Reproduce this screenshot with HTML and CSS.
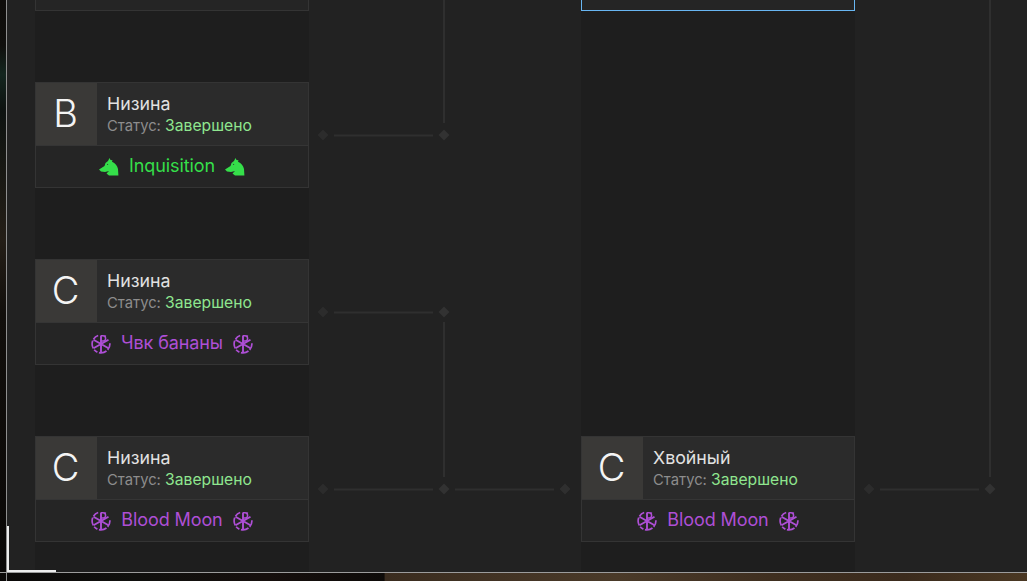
FILE: index.html
```html
<!DOCTYPE html>
<html lang="ru">
<head>
<meta charset="utf-8">
<title>Сетка турнира</title>
<link rel="stylesheet" href="styles.css">
</head>
<body>
<svg class="defs" width="0" height="0" aria-hidden="true">
  <symbol id="horse" viewBox="0 0 20 18">
    <path fill="currentColor" fill-rule="evenodd" d="M10.500 0 11.500 2 13.500 2.200 13 3.800Q18 6 19 11L19.400 17.500H10L7.500 15.500 10 13 6 14 2 13.500 0 11.500 5.500 8 6.500 5 9 3ZM8.500 5.800 8 7 9.400 6.700Z"/>
  </symbol>
  <symbol id="wheel" viewBox="0 0 20 20">
    <g fill="none" stroke="currentColor">
      <circle cx="10" cy="10" r="8.900" stroke-width="1.700" stroke-dasharray="6.400 1.600 8 1.600 4 1.600 8 1.600 6"/>
      <path d="M10 1.500V19M2.500 5.700 17.500 14.300M17.500 5.700 2.500 14.300" stroke-width="1.900"/>
      <path d="M10 1.800H12Q14.600 1.800 14.600 4.400T12 7H10" stroke-width="1.500"/>
    </g>
  </symbol>
  <symbol id="link" viewBox="0 0 142 12">
    <path fill="#2c2c2c" d="M6 .5 11.500 6 6 11.500 .5 6Z"/>
    <rect fill="#2f2f2f" x="17" y="5.500" width="99" height="2"/>
    <path fill="#323232" d="M127 .5 132.500 6 127 11.500 121.500 6Z"/>
  </symbol>
</svg>
<div class="frame">
  <main class="panel">
    <section class="round">
      <article class="card"></article>
      <article class="card">
        <div class="head"><div class="grade">B</div><div class="info"><div class="name">Низина</div><div class="status">Статус: <span class="done">Завершено</span></div></div></div>
        <div class="team team-green"><svg class="ico-horse"><use href="#horse"/></svg><span>Inquisition</span><svg class="ico-horse"><use href="#horse"/></svg></div>
      </article>
      <article class="card">
        <div class="head"><div class="grade">C</div><div class="info"><div class="name">Низина</div><div class="status">Статус: <span class="done">Завершено</span></div></div></div>
        <div class="team team-purple"><svg class="ico-wheel"><use href="#wheel"/></svg><span>Чвк бананы</span><svg class="ico-wheel"><use href="#wheel"/></svg></div>
      </article>
      <article class="card">
        <div class="head"><div class="grade">C</div><div class="info"><div class="name">Низина</div><div class="status">Статус: <span class="done">Завершено</span></div></div></div>
        <div class="team team-purple"><svg class="ico-wheel"><use href="#wheel"/></svg><span>Blood Moon</span><svg class="ico-wheel"><use href="#wheel"/></svg></div>
      </article>
    </section>
    <svg class="links" viewBox="0 0 272 581" aria-hidden="true">
      <rect class="wire" x="134" y="0" width="2" height="123"/>
      <use href="#link" x="8" y="129" width="142" height="12"/>
      <use href="#link" x="8" y="306" width="142" height="12"/>
      <rect class="wire" x="134" y="322" width="2" height="155"/>
      <use href="#link" x="8" y="483" width="142" height="12"/>
      <rect class="wire" x="146" y="488.500" width="99" height="2"/>
      <path class="wire" d="M256 483.500 261.500 489 256 494.500 250.500 489Z"/>
    </svg>
    <section class="round">
      <article class="card card-active"></article>
      <div class="spacer"></div>
      <article class="card">
        <div class="head"><div class="grade">C</div><div class="info"><div class="name">Хвойный</div><div class="status">Статус: <span class="done">Завершено</span></div></div></div>
        <div class="team team-purple"><svg class="ico-wheel"><use href="#wheel"/></svg><span>Blood Moon</span><svg class="ico-wheel"><use href="#wheel"/></svg></div>
      </article>
    </section>
    <svg class="links links-end" viewBox="0 0 172 581" aria-hidden="true">
      <rect class="wire" x="134" y="0" width="2" height="477"/>
      <use href="#link" x="8" y="483" width="142" height="12"/>
    </svg>
  </main>
  <div class="vline"></div>
  <div class="hline"></div>
  <div class="corner"></div>
</div>
</body>
</html>
```
FILE: styles.css
```css
* { box-sizing: border-box; }
html, body { margin: 0; height: 100%; overflow: hidden; }
body {
  width: 1027px;
  height: 581px;
  background:
    linear-gradient(90deg, #0b0908 0, #10100e 13%, #160f0d 26%, #0e0b09 37.400%, #3a2c1f 37.500%, #4a3a29 60%, #3f2f20 75%, #3b2b1d 88%, #4a3823 100%);
  font-family: "Inter", "Liberation Sans", sans-serif;
}
.defs { position: absolute; }
.frame {
  position: relative;
  display: grid;
  grid-template-columns: 6px 1px 1020px;
  grid-template-rows: 572px 1px 8px;
  width: 1027px;
  height: 581px;
}
.frame::before {
  content: "";
  grid-column: 1;
  grid-row: 1;
  background: linear-gradient(180deg, #0f0d0b 0, #100f0d 8%, #14261f 13%, #0e1311 19%, #241e17 42%, #120f0c 55%, #0a0807 100%);
}
.panel {
  grid-column: 3;
  grid-row: 1;
  display: flex;
  align-items: flex-start;
  padding-left: 28px;
  background: #222222;
  overflow: hidden;
}
.vline { grid-column: 2; grid-row: 1 / 4; background: #8f8f8f; }
.hline { grid-column: 1 / 4; grid-row: 2; background: #9c9c9c; }
.corner {
  position: absolute;
  left: 7px;
  top: 526px;
  width: 49px;
  height: 46px;
  border-left: 2px solid #ececec;
  border-bottom: 2px solid #ececec;
}
.round {
  flex: 0 0 274px;
  display: flex;
  flex-direction: column;
  gap: 71px;
  height: 700px;
  margin-top: -95px;
  background: #1e1e1e;
}
.links { flex: 0 0 auto; width: 272px; height: 581px; display: block; }
.links-end { width: 172px; }
.wire { fill: #2f2f2f; }
.spacer { flex: 0 0 283px; }
.card {
  flex: 0 0 106px;
  display: flex;
  flex-direction: column;
  background: #252525;
  border: 1px solid #343434;
}
.card-active { border-color: #68b6f2; }
.head {
  display: flex;
  flex: 0 0 63px;
  background: #2b2b2b;
  border-bottom: 1px solid #353535;
}
.grade {
  flex: 0 0 61px;
  display: flex;
  align-items: center;
  justify-content: center;
  padding: 0 2px 2px 0;
  background: #3a3937;
  color: #f4f4f4;
  font-size: 38px;
  font-weight: 350;
}
.info { padding: 10px 0 0 10px; }
.name { color: #e2e2e2; font-size: 17.800px; line-height: 21px; }
.status { margin-top: 1px; color: #8d8d8d; font-size: 14.800px; line-height: 21px; }
.done { color: #8fe68f; font-size: 15.700px; }
.team {
  flex: 1;
  display: flex;
  align-items: center;
  justify-content: center;
  gap: 10px;
  font-size: 18px;
  letter-spacing: -0.1px;
}
.team span { margin-bottom: 3px; }
.team-green { color: #35df4a; }
.team-purple { color: #ae4fd6; }
.ico-horse { width: 20px; height: 18px; }
.ico-wheel { width: 20px; height: 20px; }
```
